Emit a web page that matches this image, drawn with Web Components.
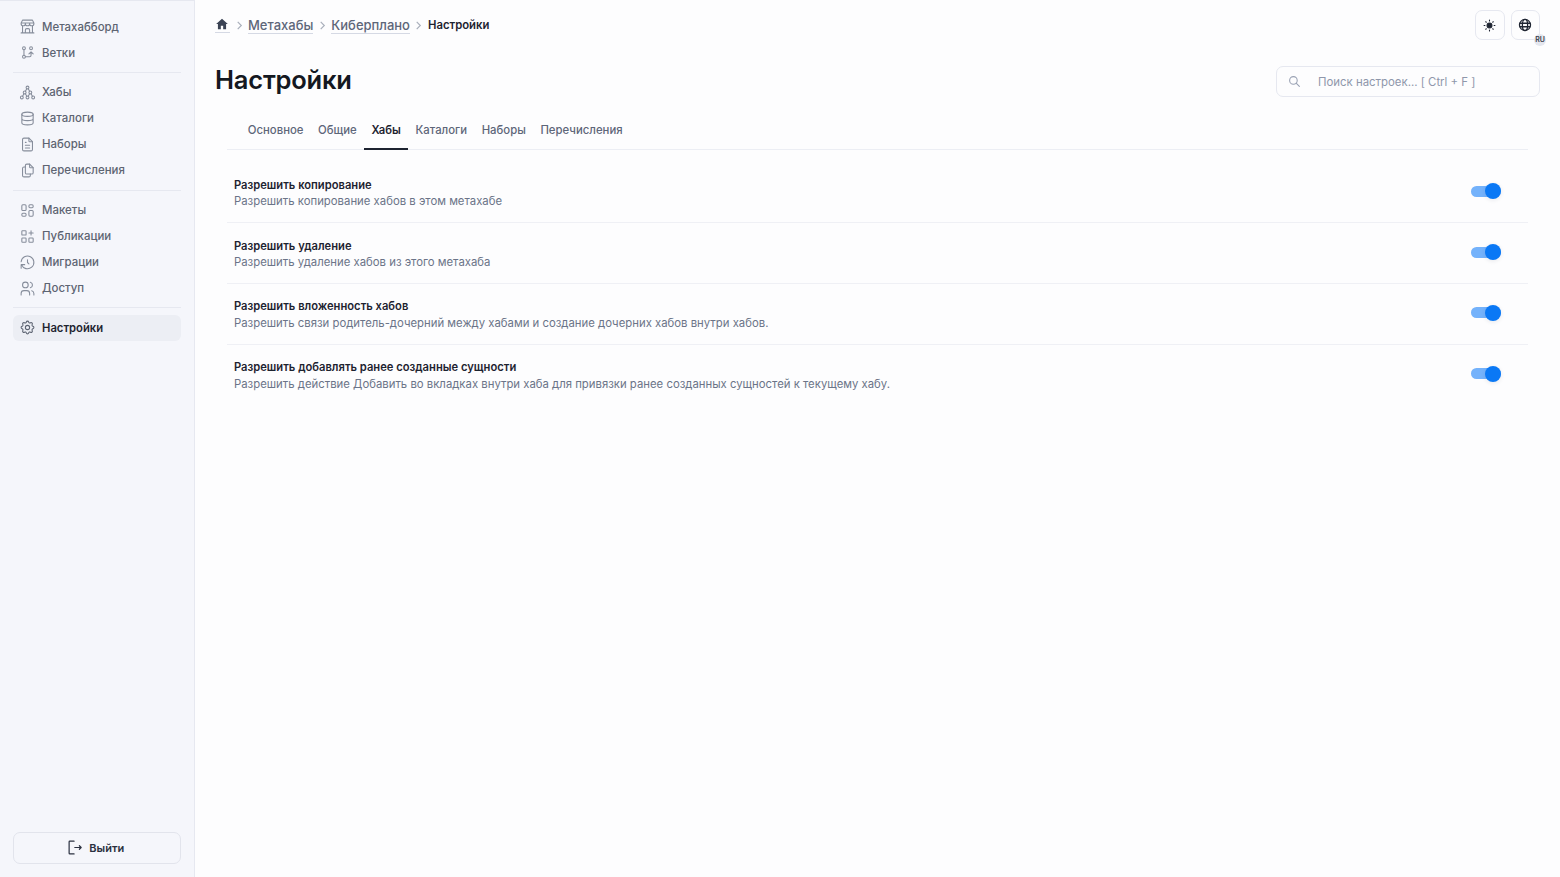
<!DOCTYPE html>
<html lang="ru">
<head>
<meta charset="utf-8">
<title>Настройки</title>
<style>
  html, body { margin: 0; height: 100%; }
  body { font-family: Inter, "Noto Sans", sans-serif; background: #fdfdfe; overflow: hidden; }
</style>
</head>
<body>
<app-shell>
  <side-nav slot="side">
    <nav-item icon="store">Метахабборд</nav-item>
    <nav-item icon="branch">Ветки</nav-item>
    <nav-rule></nav-rule>
    <nav-item icon="hubs">Хабы</nav-item>
    <nav-item icon="db">Каталоги</nav-item>
    <nav-item icon="file">Наборы</nav-item>
    <nav-item icon="copy">Перечисления</nav-item>
    <nav-rule></nav-rule>
    <nav-item icon="layout">Макеты</nav-item>
    <nav-item icon="publish">Публикации</nav-item>
    <nav-item icon="history">Миграции</nav-item>
    <nav-item icon="users">Доступ</nav-item>
    <nav-rule></nav-rule>
    <nav-item icon="gear" active>Настройки</nav-item>
    <logout-button slot="foot">Выйти</logout-button>
  </side-nav>
  <top-bar></top-bar>
  <page-head>Настройки</page-head>
  <tab-bar>
    <tab-item>Основное</tab-item>
    <tab-item>Общие</tab-item>
    <tab-item active>Хабы</tab-item>
    <tab-item>Каталоги</tab-item>
    <tab-item>Наборы</tab-item>
    <tab-item>Перечисления</tab-item>
  </tab-bar>
  <settings-list>
    <setting-row heading="Разрешить копирование">Разрешить копирование хабов в этом метахабе</setting-row>
    <setting-row heading="Разрешить удаление">Разрешить удаление хабов из этого метахаба</setting-row>
    <setting-row heading="Разрешить вложенность хабов">Разрешить связи родитель-дочерний между хабами и создание дочерних хабов внутри хабов.</setting-row>
    <setting-row heading="Разрешить добавлять ранее созданные сущности" last>Разрешить действие Добавить во вкладках внутри хаба для привязки ранее созданных сущностей к текущему хабу.</setting-row>
  </settings-list>
</app-shell>

<script>
const ICONS = {
  store: '<path d="M3 21h18M3 7v1a3 3 0 0 0 6 0V7m0 1a3 3 0 0 0 6 0V7m0 1a3 3 0 0 0 6 0V7H3l2-4h14l2 4M5 21V10.85M19 21V10.85M9 21v-4a2 2 0 0 1 2-2h2a2 2 0 0 1 2 2v4"/>',
  branch: '<circle cx="7" cy="18" r="2"/><circle cx="7" cy="6" r="2"/><circle cx="17" cy="6" r="2"/><path d="M7 8v8M9 18h6a2 2 0 0 0 2-2v-5M14 14l3-3 3 3"/>',
  hubs: '<circle cx="12" cy="5" r="2"/><circle cx="8" cy="12" r="2"/><circle cx="16" cy="12" r="2"/><circle cx="4" cy="19" r="2"/><circle cx="12" cy="19" r="2"/><circle cx="20" cy="19" r="2"/><path d="m11 6.8-2 3.4M13 6.800l2 3.400M7 13.800l-2 3.400M9 13.800l2 3.400M15 13.800l-2 3.400M17 13.800l2 3.400"/>',
  db: '<ellipse cx="12" cy="6" rx="8" ry="3"/><path d="M4 6v6c0 1.660 3.580 3 8 3s8-1.340 8-3V6M4 12v6c0 1.660 3.580 3 8 3s8-1.340 8-3v-6"/>',
  file: '<path d="M14 3v4a1 1 0 0 0 1 1h4"/><path d="M17 21H7a2 2 0 0 1-2-2V5a2 2 0 0 1 2-2h7l5 5v11a2 2 0 0 1-2 2zM9 9h1M9 13h6M9 17h6"/>',
  copy: '<path d="M15 3v4a1 1 0 0 0 1 1h4"/><path d="M18 17h-7a2 2 0 0 1-2-2V5a2 2 0 0 1 2-2h4l5 5v7a2 2 0 0 1-2 2z"/><path d="M16 17v2a2 2 0 0 1-2 2H7a2 2 0 0 1-2-2V9a2 2 0 0 1 2-2h2"/>',
  layout: '<rect x="4" y="4" width="6" height="8" rx="1.500"/><rect x="14" y="4" width="6" height="4" rx="1.500"/><rect x="4" y="16" width="6" height="4" rx="1.500"/><rect x="14" y="12" width="6" height="8" rx="1.500"/>',
  publish: '<rect x="4" y="4" width="6" height="6" rx="1"/><rect x="4" y="14" width="6" height="6" rx="1"/><rect x="14" y="14" width="6" height="6" rx="1"/><path d="M14 7h6M17 4v6"/>',
  history: '<path d="M12 8v4l2 2"/><path d="M3.050 11a9 9 0 1 1 .5 4m-.5 5v-5h5"/>',
  users: '<circle cx="9" cy="7" r="4"/><path d="M3 21v-2a4 4 0 0 1 4-4h4a4 4 0 0 1 4 4v2M16 3.130a4 4 0 0 1 0 7.750M21 21v-2a4 4 0 0 0-3-3.850"/>',
  gear: '<path d="M10.325 4.317c.426-1.756 2.924-1.756 3.350 0a1.724 1.724 0 0 0 2.573 1.066c1.543-.940 3.310.826 2.370 2.370a1.724 1.724 0 0 0 1.065 2.572c1.756.426 1.756 2.924 0 3.350a1.724 1.724 0 0 0-1.066 2.573c.940 1.543-.826 3.310-2.370 2.370a1.724 1.724 0 0 0-2.572 1.065c-.426 1.756-2.924 1.756-3.350 0a1.724 1.724 0 0 0-2.573-1.066c-1.543.940-3.310-.826-2.370-2.370a1.724 1.724 0 0 0-1.065-2.572c-1.756-.426-1.756-2.924 0-3.350a1.724 1.724 0 0 0 1.066-2.573c-.940-1.543.826-3.310 2.370-2.370 1 .608 2.296.070 2.572-1.065z"/><circle cx="12" cy="12" r="3"/>'
};

function svgIcon(name, size) {
  return `<svg width="${size}" height="${size}" viewBox="0 0 24 24" fill="none" stroke="currentColor" stroke-width="1.500" stroke-linecap="round" stroke-linejoin="round">${ICONS[name]}</svg>`;
}

const CHEVRON = '<span class="sep"><svg width="9" height="9" viewBox="0 0 10 10" fill="none" stroke="currentColor" stroke-width="1.300"><path d="m3 1 4 4-4 4"/></svg></span>';

class AppShell extends HTMLElement {
  constructor() {
    super();
    this.attachShadow({ mode: 'open' }).innerHTML = `
      <style>
        :host { display: grid; grid-template-columns: 195px 1fr; height: 877px; }
        main { min-width: 0; padding: 0 20px 0 20px; display: flex; flex-direction: column; }
      </style>
      <slot name="side"></slot>
      <main><slot></slot></main>`;
  }
}

class SideNav extends HTMLElement {
  constructor() {
    super();
    this.attachShadow({ mode: 'open' }).innerHTML = `
      <style>
        :host { display: flex; flex-direction: column; box-sizing: border-box; height: 877px;
                padding: 12.500px 13px 13px 13px; background: #f5f6fb;
                border-right: 1px solid #e6e8f0; border-top: 1px solid #e6e8f0; }
        .items { flex: 1; display: flex; flex-direction: column; }
      </style>
      <div class="items"><slot></slot></div>
      <slot name="foot"></slot>`;
  }
}

class NavItem extends HTMLElement {
  constructor() {
    super();
    const icon = this.getAttribute('icon');
    this.attachShadow({ mode: 'open' }).innerHTML = `
      <style>
        :host { display: flex; align-items: center; gap: 6px; height: 26px; padding-left: 6px;
                border-radius: 6px; font-size: 11.450px; font-weight: 500; color: #5d6472; }
        :host([active]) { background: #eceef4; color: #1e2430; font-weight: 600; font-size: 11.250px; }
        svg { flex: none; color: #868d9b; }
        :host([active]) svg { color: #5d6472; }
      </style>
      ${svgIcon(icon, 17)}<slot></slot>`;
  }
}

class NavRule extends HTMLElement {
  constructor() {
    super();
    this.attachShadow({ mode: 'open' }).innerHTML = `
      <style>:host { display: block; height: 1px; margin: 6.400px 0 6.400px; background: #e6e8f0; }</style>`;
  }
}

class LogoutButton extends HTMLElement {
  constructor() {
    super();
    this.attachShadow({ mode: 'open' }).innerHTML = `
      <style>
        :host { display: flex; align-items: center; justify-content: center; gap: 5.500px; box-sizing: border-box; height: 32px;
                padding: 0 3px 1px 0; border: 1px solid #e2e4ec; border-radius: 7px;
                font-size: 11px; font-weight: 600; color: #2a3040; }
      </style>
      <svg width="17" height="17" viewBox="0 0 24 24" fill="none" stroke="currentColor" stroke-width="1.700" stroke-linecap="round" stroke-linejoin="round"><path d="M10 3H4a1 1 0 0 0-1 1v16a1 1 0 0 0 1 1h6M11 12h9M17.500 9.500 20 12l-2.500 2.500"/></svg>
      <slot></slot>`;
  }
}

class TopBar extends HTMLElement {
  constructor() {
    super();
    this.attachShadow({ mode: 'open' }).innerHTML = `
      <style>
        :host { display: flex; align-items: center; height: 50px; font-size: 13px; }
        .crumbs { display: flex; align-items: center; flex: 1; }
        a { color: #5d6679; font-weight: 500; border-bottom: 1px solid #d5d9e4; line-height: 16px; }
        a.home { display: flex; color: #3b4354; padding: 0 1px 1px 0; }
        .sep { display: flex; color: #a9afbb; margin: 0 4.500px; }
        b { font-size: 11.300px; font-weight: 600; color: #1d2330; }
        .btns { display: flex; gap: 6px; }
        button { position: relative; box-sizing: border-box; width: 29.500px; height: 29.500px; padding: 0; display: flex;
                 align-items: center; justify-content: center; background: #fdfdfe; color: #1f2532;
                 border: 1px solid #e6e8f0; border-radius: 7px; }
        .badge { position: absolute; right: -7px; bottom: -7px; width: 12px; height: 12px; border-radius: 50%;
                 background: #e4e6ee; color: #3a3f4c; font: 600 7px/12px Inter, sans-serif; text-align: center; }
      </style>
      <div class="crumbs">
        <a class="home"><svg width="14" height="14" viewBox="0 0 24 24" fill="currentColor"><path d="M12 3 2 12h3v9h5v-6h4v6h5v-9h3z"/></svg></a>
        ${CHEVRON}
        <a>Метахабы</a>
        ${CHEVRON}
        <a>Киберплано</a>
        ${CHEVRON}
        <b>Настройки</b>
      </div>
      <div class="btns">
        <button aria-label="Тема"><svg width="13" height="13" viewBox="0 0 24 24" fill="currentColor" stroke="currentColor" stroke-width="2" stroke-linecap="round"><circle cx="12" cy="12" r="4.500"/><path d="M12 2v1.500M12 20.500V22M2 12h1.500M20.500 12H22M5 5l1 1M18 18l1 1M5 19l1-1M18 6l1-1"/></svg></button>
        <button aria-label="Язык"><svg width="14" height="14" viewBox="0 0 24 24" fill="none" stroke="currentColor" stroke-width="2.200"><circle cx="12" cy="12" r="9.500"/><ellipse cx="12" cy="12" rx="4.500" ry="9.500"/><path d="M3 9h18M3 15h18"/></svg><span class="badge">RU</span></button>
      </div>`;
  }
}

class PageHead extends HTMLElement {
  constructor() {
    super();
    this.attachShadow({ mode: 'open' }).innerHTML = `
      <style>
        :host { display: flex; align-items: center; justify-content: space-between; height: 59px; }
        h1 { margin: 0; font-size: 25.500px; font-weight: 600; color: #141821; letter-spacing: -.2px; }
        .search { box-sizing: border-box; width: 264px; height: 31px; margin-top: 3px; display: flex; align-items: center; gap: 17px;
                  padding-left: 11px; border: 1px solid #e6e8f0; border-radius: 7px;
                  font-size: 11.400px; color: #8f97ab; }
        .search span { margin-top: 2px; }
        svg { color: #9aa2b4; }
      </style>
      <h1><slot></slot></h1>
      <div class="search">
        <svg width="13" height="13" viewBox="0 0 24 24" fill="none" stroke="currentColor" stroke-width="2" stroke-linecap="round"><circle cx="10" cy="10" r="7"/><path d="m21 21-6-6"/></svg>
        <span>Поиск настроек... [ Ctrl + F ]</span>
      </div>`;
  }
}

class TabBar extends HTMLElement {
  constructor() {
    super();
    this.attachShadow({ mode: 'open' }).innerHTML = `
      <style>
        :host { display: flex; margin: 0 12px; padding: 0 13.500px; height: 40px; gap: 0;
                border-bottom: 1px solid #eceef4; }
      </style>
      <slot></slot>`;
  }
}

class TabItem extends HTMLElement {
  constructor() {
    super();
    this.attachShadow({ mode: 'open' }).innerHTML = `
      <style>
        :host { display: flex; align-items: center; box-sizing: border-box; height: 41px; padding: 0 7.300px;
                font-size: 11.350px; font-weight: 500; color: #5d6679; }
        :host([active]) { color: #1d2330; font-weight: 600; font-size: 11.250px; border-bottom: 2px solid #1d2330; padding-top: 2px; }
      </style>
      <slot></slot>`;
  }
}

class SettingsList extends HTMLElement {
  constructor() {
    super();
    this.attachShadow({ mode: 'open' }).innerHTML = `
      <style>:host { display: flex; flex-direction: column; margin: 12px 12px 0; }</style>
      <slot></slot>`;
  }
}

class SettingRow extends HTMLElement {
  constructor() {
    super();
    const heading = this.getAttribute('heading');
    this.attachShadow({ mode: 'open' }).innerHTML = `
      <style>
        :host { display: flex; align-items: center; justify-content: space-between; box-sizing: border-box; height: 60.900px;
                padding: 0 27px 0 7px; border-bottom: 1px solid #eff0f5; }
        :host([last]) { border-bottom-color: transparent; }
        .text { padding-top: 2px; }
        h3 { margin: 0 0 .6px; font-size: 11.200px; line-height: 16px; font-weight: 600; color: #1d2330; }
        p { margin: 0; font-size: 11.350px; line-height: 16px; color: #6b7488; }
        .switch { position: relative; width: 30px; height: 11px; margin-top: -1.600px; border-radius: 6px; background: #74b2fb; }
        .switch i { position: absolute; right: 0; top: -2.500px; width: 16px; height: 16px; border-radius: 50%;
                    background: #0a78f5; box-shadow: 0 1px 4px rgba(30,40,70,.1); }
      </style>
      <div class="text"><h3>${heading}</h3><p><slot></slot></p></div>
      <div class="switch"><i></i></div>`;
  }
}

customElements.define('app-shell', AppShell);
customElements.define('side-nav', SideNav);
customElements.define('nav-item', NavItem);
customElements.define('nav-rule', NavRule);
customElements.define('logout-button', LogoutButton);
customElements.define('top-bar', TopBar);
customElements.define('page-head', PageHead);
customElements.define('tab-bar', TabBar);
customElements.define('tab-item', TabItem);
customElements.define('settings-list', SettingsList);
customElements.define('setting-row', SettingRow);
</script>
</body>
</html>
